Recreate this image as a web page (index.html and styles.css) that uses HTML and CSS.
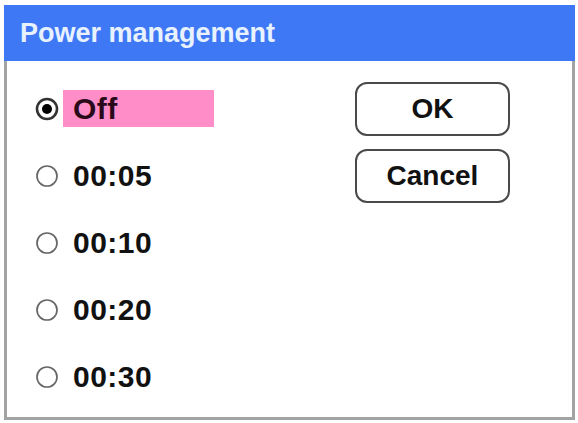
FILE: index.html
```html
<!DOCTYPE html>
<html lang="en">
<head>
    <meta charset="UTF-8">
    <title>Power management</title>
    <link rel="stylesheet" href="styles.css">
</head>
<body>
    <div class="dialog">
        <div class="titlebar">Power management</div>
        <div class="content">
            <div class="options">
                <div class="option">
                    <svg class="radio" viewBox="0 0 24 24"><circle cx="12" cy="12" r="10" fill="#fff" stroke="#333" stroke-width="2.6"/><circle cx="12" cy="12" r="5" fill="#000"/></svg>
                    <span class="label selected">Off</span>
                </div>
                <div class="option">
                    <svg class="radio" viewBox="0 0 24 24"><circle cx="12" cy="12" r="10" fill="#fff" stroke="#666" stroke-width="1.7"/></svg>
                    <span class="label">00:05</span>
                </div>
                <div class="option">
                    <svg class="radio" viewBox="0 0 24 24"><circle cx="12" cy="12" r="10" fill="#fff" stroke="#666" stroke-width="1.7"/></svg>
                    <span class="label">00:10</span>
                </div>
                <div class="option">
                    <svg class="radio" viewBox="0 0 24 24"><circle cx="12" cy="12" r="10" fill="#fff" stroke="#666" stroke-width="1.7"/></svg>
                    <span class="label">00:20</span>
                </div>
                <div class="option">
                    <svg class="radio" viewBox="0 0 24 24"><circle cx="12" cy="12" r="10" fill="#fff" stroke="#666" stroke-width="1.7"/></svg>
                    <span class="label">00:30</span>
                </div>
            </div>
            <div class="buttons">
                <button class="btn">OK</button>
                <button class="btn">Cancel</button>
            </div>
        </div>
    </div>
</body>
</html>
```

FILE: styles.css
```css
body {
    margin: 0;
    padding: 0;
    background-color: #ffffff;
    font-family: "Liberation Sans", Arial, sans-serif;
}
.dialog {
    width: 571px;
    margin: 5px 0 0 4px;
}
.titlebar {
    height: 56px;
    line-height: 56px;
    background-color: #3f78f4;
    color: #e8f2ff;
    font-size: 27px;
    font-weight: bold;
    padding-left: 16px;
}
.content {
    display: flex;
    height: 356px;
    border: 3px solid #a3a3a3;
    border-top: none;
    background: #ffffff;
}
.options {
    padding: 14px 0 0 28px;
    width: 320px;
}
.option {
    display: flex;
    align-items: center;
    height: 67px;
}
.radio {
    width: 24px;
    height: 24px;
    margin-right: 4px;
}
.label {
    width: 141px;
    height: 37px;
    line-height: 37px;
    padding-left: 10px;
    font-size: 30px;
    font-weight: bold;
    color: #111;
    letter-spacing: 0.5px;
}
.label.selected {
    background-color: #ff8ec8;
    color: #2a0a1a;
}
.buttons {
    display: flex;
    flex-direction: column;
    gap: 13px;
    padding-top: 21px;
}
.btn {
    width: 155px;
    height: 54px;
    border: 2px solid #4a4a4a;
    border-radius: 12px;
    background: #ffffff;
    font-family: "Liberation Sans", Arial, sans-serif;
    font-size: 28px;
    font-weight: bold;
    color: #111;
    padding: 0;
}
```
